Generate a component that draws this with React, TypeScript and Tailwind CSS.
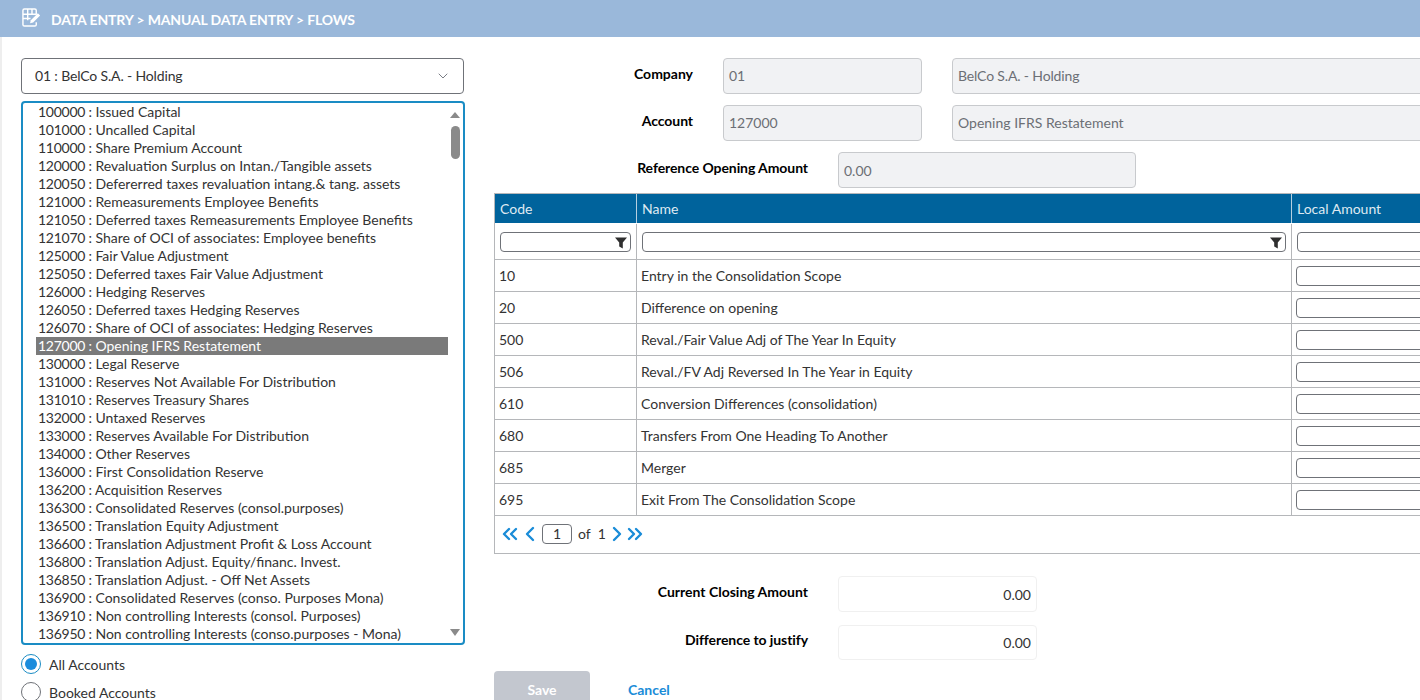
import { ChevronDown, ChevronLeft, ChevronRight, ChevronsLeft, ChevronsRight } from 'lucide-react';

const accounts = [
  '100000 : Issued Capital',
  '101000 : Uncalled Capital',
  '110000 : Share Premium Account',
  '120000 : Revaluation Surplus on Intan./Tangible assets',
  '120050 : Defererred taxes revaluation intang.& tang. assets',
  '121000 : Remeasurements Employee Benefits',
  '121050 : Deferred taxes Remeasurements Employee Benefits',
  '121070 : Share of OCI of associates: Employee benefits',
  '125000 : Fair Value Adjustment',
  '125050 : Deferred taxes Fair Value Adjustment',
  '126000 : Hedging Reserves',
  '126050 : Deferred taxes Hedging Reserves',
  '126070 : Share of OCI of associates: Hedging Reserves',
  '127000 : Opening IFRS Restatement',
  '130000 : Legal Reserve',
  '131000 : Reserves Not Available For Distribution',
  '131010 : Reserves Treasury Shares',
  '132000 : Untaxed Reserves',
  '133000 : Reserves Available For Distribution',
  '134000 : Other Reserves',
  '136000 : First Consolidation Reserve',
  '136200 : Acquisition Reserves',
  '136300 : Consolidated Reserves (consol.purposes)',
  '136500 : Translation Equity Adjustment',
  '136600 : Translation Adjustment Profit & Loss Account',
  '136800 : Translation Adjust. Equity/financ. Invest.',
  '136850 : Translation Adjust. - Off Net Assets',
  '136900 : Consolidated Reserves (conso. Purposes Mona)',
  '136910 : Non controlling Interests (consol. Purposes)',
  '136950 : Non controlling Interests (conso.purposes - Mona)',
];

const flows = [
  ['10', 'Entry in the Consolidation Scope'],
  ['20', 'Difference on opening'],
  ['500', 'Reval./Fair Value Adj of The Year In Equity'],
  ['506', 'Reval./FV Adj Reversed In The Year in Equity'],
  ['610', 'Conversion Differences (consolidation)'],
  ['680', 'Transfers From One Heading To Another'],
  ['685', 'Merger'],
  ['695', 'Exit From The Consolidation Scope'],
];

const FilterIcon = () => (
  <svg viewBox="0 0 12 12" className="absolute right-[3px] top-[3px] h-[13px] w-[12px] text-[#2f2f2f]">
    <path d="M0 1h12L7.8 6V12L4.2 10V6Z" fill="currentColor" />
  </svg>
);

const App = () => {
  return (
    <div className="h-[700px] w-[1420px] overflow-hidden bg-white font-['Lato',sans-serif] text-[14px] text-[#333333]">
      {/* Title bar */}
      <header className="flex h-[37px] items-center bg-[#9ab8da] pl-[22px] text-white">
        <svg viewBox="0 0 20 20" className="mb-[3px] h-[19px] w-[19px]" fill="none" stroke="currentColor" strokeWidth="1.5">
          <path d="M15 7V2.5A1.5 1.5 0 0 0 13.5 1h-11A1.5 1.5 0 0 0 1 2.5v15A1.5 1.5 0 0 0 2.5 19h11a1.5 1.5 0 0 0 1.5-1.5V15" />
          <path d="M1 6.5h14M1 11h8M6 1v12M10.5 1v6" />
          <path d="M8.5 16l.8-3.2 7.4-7.4 2.4 2.4-7.4 7.4Z" fill="currentColor" stroke="none" />
        </svg>
        <h1 className="ml-[10px] pt-[2px] text-[14px] font-bold tracking-[-0.13px]">DATA ENTRY &gt; MANUAL DATA ENTRY &gt; FLOWS</h1>
      </header>

      <div className="flex border-l-2 border-[#eeeeee]">
        {/* Account picker */}
        <aside className="ml-[19px] w-[444px] shrink-0 pt-[21px]">
          <div className="flex h-[36px] w-[443px] items-center justify-between rounded-[4px] border border-[#6f7278] pl-[13px] pr-[12px]">
            <span className="pb-[2px] tracking-[-0.15px]">01 : BelCo S.A. - Holding</span>
            <ChevronDown size={16} strokeWidth={1.5} className="text-[#7a7d85]" />
          </div>

          <div className="relative mt-[7px] h-[544px] overflow-hidden rounded-[4px] border-2 border-[#1a8cc4]">
            <ul className="pl-[13px] pr-[15px]">
              {accounts.map((account) => {
                const [code, name] = account.split(' : ');
                return (
                  <li
                    key={account}
                    className={
                      code === '127000'
                        ? 'h-[18px] bg-[#7a7a7a] pl-[2px] leading-[18px] text-white'
                        : 'h-[18px] pl-[2px] leading-[18px]'
                    }
                  >
                    <span className="tracking-[-0.25px]">{code} :</span> {name}
                  </li>
                );
              })}
            </ul>
            <div className="absolute right-[3px] top-[9px] h-0 w-0 border-x-[5px] border-b-[6px] border-x-transparent border-b-[#8a8a8a]" />
            <div className="absolute right-[3px] top-[23px] h-[33px] w-[9px] rounded-full bg-[#8a8a8a]" />
            <div className="absolute bottom-[7px] right-[3px] h-0 w-0 border-x-[5px] border-t-[7px] border-x-transparent border-t-[#8a8a8a]" />
          </div>

          <div className="mt-[8px] flex h-[22px] items-center gap-[8px]">
            <span className="flex h-[20px] w-[20px] items-center justify-center rounded-full border border-[#1a8cc4]">
              <span className="h-[12px] w-[12px] rounded-full bg-[#1a8cdc]" />
            </span>
            All Accounts
          </div>
          <div className="mt-[6px] flex h-[22px] items-center gap-[8px]">
            <span className="h-[20px] w-[20px] rounded-full border border-[#6f7278]" />
            Booked Accounts
          </div>
        </aside>

        {/* Entry form */}
        <main className="ml-[29px] w-[1000px] shrink-0 pt-[21px]">
          <div className="flex h-[36px] items-center">
            <label className="w-[199px] shrink-0 pb-[6px] text-right font-bold text-black">Company</label>
            <div className="ml-[30px] flex h-[36px] w-[199px] shrink-0 items-center rounded-[4px] border border-[#c8cacd] bg-[#f1f2f4] pb-[2px] pl-[5px] text-[#6c6f75]">01</div>
            <div className="ml-[30px] flex h-[36px] w-[600px] shrink-0 items-center rounded-[4px] border border-[#c8cacd] bg-[#f1f2f4] pb-[2px] pl-[5px] tracking-[-0.15px] text-[#6c6f75]">BelCo S.A. - Holding</div>
          </div>
          <div className="mt-[11px] flex h-[36px] items-center">
            <label className="w-[199px] shrink-0 pb-[6px] text-right font-bold tracking-[-0.08px] text-black">Account</label>
            <div className="ml-[30px] flex h-[36px] w-[199px] shrink-0 items-center rounded-[4px] border border-[#c8cacd] bg-[#f1f2f4] pb-[2px] pl-[5px] text-[#6c6f75]">127000</div>
            <div className="ml-[30px] flex h-[36px] w-[600px] shrink-0 items-center rounded-[4px] border border-[#c8cacd] bg-[#f1f2f4] pb-[2px] pl-[5px] text-[#6c6f75]">Opening IFRS Restatement</div>
          </div>
          <div className="mt-[11px] flex h-[36px] items-center">
            <label className="w-[314px] shrink-0 pb-[6px] text-right font-bold tracking-[-0.08px] text-black">Reference Opening Amount</label>
            <div className="ml-[30px] flex h-[36px] w-[298px] shrink-0 items-center rounded-[4px] border border-[#c8cacd] bg-[#f1f2f4] pl-[5px] text-[#6c6f75]">0.00</div>
          </div>

          {/* Flows table */}
          <div className="mt-[5px] w-[1000px] border border-[#b5b7ba]">
            <div className="grid h-[29px] grid-cols-[141px_655px_1fr] items-center bg-[#00639c] text-[#dfeaf2]">
              <div className="flex h-full items-center pl-[5px]">Code</div>
              <div className="flex h-full items-center border-l border-[#b5cfe0] pl-[5px]">Name</div>
              <div className="flex h-full items-center border-l border-[#b5cfe0] pl-[5px]">Local Amount</div>
            </div>
            <div className="grid h-[37px] grid-cols-[141px_655px_1fr] border-b border-[#b5b7ba] pt-[1px]">
              <div className="flex items-center pl-[5px] pr-[5px]">
                <div className="relative h-[20px] w-full rounded-[4px] border border-[#6f7278]"><FilterIcon /></div>
              </div>
              <div className="flex items-center border-l border-[#b5b7ba] pl-[5px] pr-[5px]">
                <div className="relative h-[20px] w-full rounded-[4px] border border-[#6f7278]"><FilterIcon /></div>
              </div>
              <div className="flex items-center border-l border-[#b5b7ba] pl-[5px]">
                <div className="h-[20px] w-full rounded-l-[4px] border border-[#6f7278]" />
              </div>
            </div>
            {flows.map(([code, name]) => (
              <div key={code} className="grid h-[32px] grid-cols-[141px_655px_1fr] border-b border-[#b5b7ba]">
                <div className="flex items-center pl-[4px]">{code}</div>
                <div className="flex items-center border-l border-[#b5b7ba] pl-[4px]">{name}</div>
                <div className="flex items-center border-l border-[#b5b7ba] pl-[4px]">
                  <div className="h-[20px] w-full rounded-l-[4px] border border-[#6f7278]" />
                </div>
              </div>
            ))}
            <div className="flex h-[37px] items-center pb-[2px] pl-[3px] text-[#1a8cd8]">
              <ChevronsLeft size={24} strokeWidth={2.4} />
              <ChevronLeft size={24} strokeWidth={2.4} className="ml-[-4px]" />
              <div className="ml-0 flex h-[20px] w-[30px] items-center justify-center rounded-[4px] border border-[#6f7278] text-[#333333]">1</div>
              <span className="ml-[6px] text-[#333333]">of</span>
              <span className="ml-[7px] text-[#333333]">1</span>
              <ChevronRight size={24} strokeWidth={2.4} className="ml-[-1px]" />
              <ChevronsRight size={24} strokeWidth={2.4} className="ml-[-6px]" />
            </div>
          </div>

          <div className="mt-[22px] flex h-[36px] items-center">
            <label className="w-[314px] shrink-0 pb-[6px] text-right font-bold text-black">Current Closing Amount</label>
            <div className="ml-[30px] flex h-[36px] w-[199px] shrink-0 items-center justify-end rounded-[4px] border border-[#f0f0f0] pr-[5px]">0.00</div>
          </div>
          <div className="mt-[13px] flex h-[35px] items-center">
            <label className="w-[314px] shrink-0 pb-[7px] text-right font-bold tracking-[-0.08px] text-black">Difference to justify</label>
            <div className="ml-[30px] flex h-[35px] w-[199px] shrink-0 items-center justify-end rounded-[4px] border border-[#f0f0f0] pr-[5px]">0.00</div>
          </div>

          <div className="mt-[11px] flex items-center">
            <button className="h-[38px] w-[96px] rounded-[4px] bg-[#c3c7cf] pb-[2px] font-bold text-white">Save</button>
            <button className="ml-[38px] pb-[2px] font-bold text-[#1a8cd8]">Cancel</button>
          </div>
        </main>
      </div>
    </div>
  );
};

export default App;
